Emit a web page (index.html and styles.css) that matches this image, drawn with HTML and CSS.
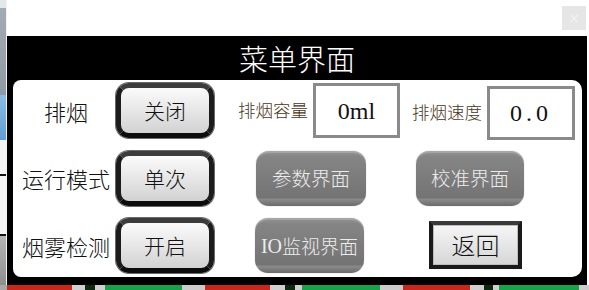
FILE: index.html
```html
<!DOCTYPE html>
<html lang="zh-CN">
<head>
<meta charset="utf-8">
<title>菜单界面</title>
<link rel="stylesheet" href="styles.css">
</head>
<body>
<div class="screen">
  <div class="upper">
    <div class="leftstrip"></div>
    <div class="main">
      <div class="topbar"><span class="close">×</span></div>
      <div class="dialogrow">
        <div class="dialog">
          <div class="title">菜单界面</div>
          <div class="panel">
            <div class="row">
              <div class="label">排烟</div>
              <div class="btn dark">关闭</div>
              <div class="small-label first">排烟容量</div>
              <div class="field f1">0ml</div>
              <div class="small-label second">排烟速度</div>
              <div class="field f2">0.0</div>
            </div>
            <div class="row">
              <div class="label">运行模式</div>
              <div class="btn dark">单次</div>
              <div class="btn gray g1">参数界面</div>
              <div class="btn gray g2">校准界面</div>
            </div>
            <div class="row">
              <div class="label">烟雾检测</div>
              <div class="btn dark">开启</div>
              <div class="btn gray g3"><span class="latin">IO</span>监视界面</div>
              <div class="btn back">返回</div>
            </div>
          </div>
        </div>
        <div class="rightstrip"></div>
      </div>
    </div>
  </div>
  <div class="bottomstrip"></div>
</div>
</body>
</html>
```
FILE: styles.css
```css
html, body {
  margin: 0;
  padding: 0;
  background: #ffffff;
}
.screen {
  width: 589px;
  height: 290px;
  display: flex;
  flex-direction: column;
  overflow: hidden;
  font-family: "Noto Sans CJK SC", sans-serif;
  font-weight: 300;
}
.upper {
  display: flex;
  height: 285px;
}
.leftstrip {
  width: 6px;
  border-right: 1px solid #f2f2f2;
  background: linear-gradient(to bottom,
    #e4e8ec 0, #e4e8ec 8px,
    #a3acb5 8px, #8f99a3 95px,
    #8dbbe3 95px, #5f9ed4 140px,
    #f4f4f4 140px, #f4f4f4 174px,
    #111 174px, #111 176px,
    #f4f4f4 176px, #f4f4f4 234px,
    #111 234px, #111 236px,
    #b5b5b5 236px, #8e8e8e 285px);
}
.main {
  width: 582px;
  display: flex;
  flex-direction: column;
}
.topbar {
  height: 36px;
  display: flex;
  justify-content: flex-end;
  align-items: flex-start;
  padding-right: 3px;
  box-sizing: border-box;
  padding-top: 6px;
}
.close {
  width: 24px;
  height: 24px;
  background: #e6e6e6;
  color: #f9f9f9;
  font-family: "DejaVu Sans", sans-serif;
  font-size: 14px;
  line-height: 24px;
  text-align: center;
}
.dialogrow {
  display: flex;
  height: 249px;
}
.dialog {
  width: 580px;
  background: #000;
  display: flex;
  flex-direction: column;
}
.rightstrip {
  width: 2px;
  background: #fff;
}
.title {
  height: 44px;
  color: #fff;
  font-size: 29px;
  line-height: 44px;
  text-align: center;
}
.panel {
  margin-left: 6px;
  margin-right: 5px;
  height: 197px;
  background: #fff;
  border-radius: 8px 10px 10px 8px;
  box-sizing: border-box;
  padding-top: 3px;
  display: flex;
  flex-direction: column;
  gap: 12.5px;
}
.row {
  height: 55px;
  display: flex;
  align-items: center;
}
.label {
  width: 92px;
  margin-left: 7px;
  text-align: center;
  font-size: 22px;
  line-height: 1;
  color: #111;
}
.btn {
  box-sizing: border-box;
  display: flex;
  align-items: center;
  justify-content: center;
  line-height: 1;
}
.dark {
  width: 98px;
  height: 55px;
  margin-left: 4px;
  border: 5px solid #1c1c1c;
  border-top-color: #3c3c3c;
  border-bottom-color: #0c0c0c;
  border-radius: 13px;
  background: linear-gradient(to bottom, #fbfbfb, #d2d2d2);
  box-shadow: 0 0 0 1px #6a6a6a;
  font-size: 21px;
  color: #111;
}
.gray {
  height: 55px;
  border-radius: 13px;
  background: linear-gradient(to bottom, #969696 0, #858585 10%, #747474 85%, #8a8a8a 88%, #6a6a6a 100%);
  box-shadow: inset 0 2px 0 rgba(255,255,255,0.18), 0 0 1px #999;
  color: #ececec;
  font-size: 19.5px;
}
.g1 { width: 110px; margin-left: 42px; }
.g2 { width: 108px; margin-left: 50px; }
.g3 { width: 109px; margin-left: 41px; font-size: 19px; }
.latin {
  font-family: "Liberation Serif", serif;
  font-weight: 400;
  font-size: 20px;
}
.back {
  width: 93px;
  height: 48px;
  margin-left: 65px;
  margin-top: -2px;
  border: 4px solid #1a1a1a;
  border-top-color: #3a3a3a;
  background: linear-gradient(to bottom, #f6f6f6, #d6d6d6);
  box-shadow: inset 0 0 0 1px #bdbdbd;
  font-size: 24px;
  color: #111;
}
.small-label {
  font-size: 17.5px;
  line-height: 1;
  color: #4a3420;
  white-space: nowrap;
}
.first { margin-left: 24px; margin-top: -2px; }
.second { margin-left: 12px; margin-top: 3px; }
.field {
  box-sizing: border-box;
  height: 55px;
  border: 3px solid #8a8a8a;
  background: #fff;
  display: flex;
  align-items: center;
  justify-content: center;
  font-family: "Liberation Serif", serif;
  font-weight: 400;
  font-size: 24px;
  color: #111;
  line-height: 1;
}
.f1 { width: 87px; margin-left: 5px; }
.f2 { width: 88px; height: 54px; margin-left: 5px; margin-top: 5px; letter-spacing: 4px; }
.bottomstrip {
  height: 5px;
  background: linear-gradient(to right,
    #a8a8a8 0, #a8a8a8 7px,
    #c9271c 7px, #c9271c 72px,
    #d0d0d0 72px, #d0d0d0 85px,
    #0c2a10 85px, #0c2a10 95px,
    #d0d0d0 95px, #d0d0d0 105px,
    #16a34a 105px, #16a34a 182px,
    #cccccc 182px, #cccccc 205px,
    #c9271c 205px, #c9271c 270px,
    #d0d0d0 270px, #d0d0d0 285px,
    #0c2a10 285px, #0c2a10 295px,
    #d0d0d0 295px, #d0d0d0 302px,
    #16a34a 302px, #16a34a 380px,
    #cccccc 380px, #cccccc 403px,
    #c9271c 403px, #c9271c 470px,
    #d0d0d0 470px, #d0d0d0 484px,
    #0c2a10 484px, #0c2a10 493px,
    #d0d0d0 493px, #d0d0d0 499px,
    #16a34a 499px, #16a34a 579px,
    #cccccc 579px, #cccccc 589px);
}
```
